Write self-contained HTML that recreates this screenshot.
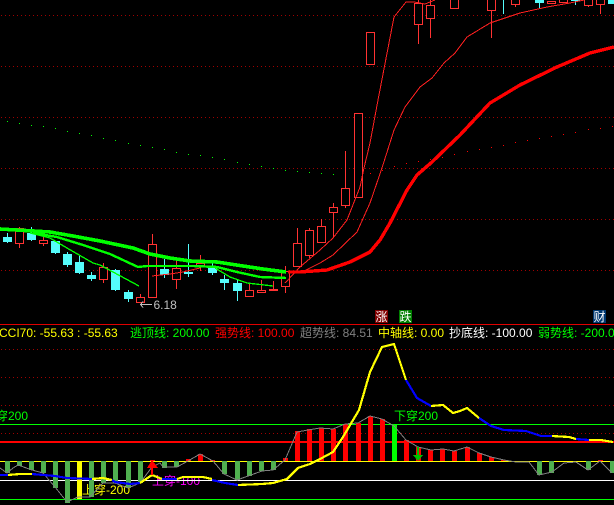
<!DOCTYPE html>
<html><head><meta charset="utf-8"><style>
html,body{margin:0;padding:0;background:#000;width:614px;height:505px;overflow:hidden}
svg{display:block;position:absolute;left:0;top:0}
text{font-family:"Liberation Sans","Noto Sans CJK SC",sans-serif;font-size:12px}
</style></head><body>
<svg width="614" height="505" viewBox="0 0 614 505" shape-rendering="crispEdges">
<rect width="614" height="505" fill="#000"/>
<!-- dotted grid -->
<path fill="none" stroke="#a00000" stroke-dasharray="1 3" d="M1 15.5H614M1 66.5H614M1 117.5H614M1 168.5H614M1 219.5H614M1 270.5H614M1 349.5H614M1 377.5H614M1 405.5H614M1 433.5H614"/>
<!-- MA dots -->
<g fill="#00ff00"><rect x="7" y="121" width="1" height="1"/><rect x="19" y="123" width="1" height="1"/><rect x="31" y="125" width="1" height="1"/><rect x="43" y="126" width="1" height="1"/><rect x="55" y="128" width="1" height="1"/><rect x="67" y="131" width="1" height="1"/><rect x="79" y="133" width="1" height="1"/><rect x="91" y="135" width="1" height="1"/><rect x="103" y="138" width="1" height="1"/><rect x="115" y="140" width="1" height="1"/><rect x="128" y="143" width="1" height="1"/><rect x="140" y="145" width="1" height="1"/><rect x="152" y="147" width="1" height="1"/><rect x="164" y="149" width="1" height="1"/><rect x="176" y="152" width="1" height="1"/><rect x="188" y="154" width="1" height="1"/><rect x="200" y="155" width="1" height="1"/><rect x="212" y="157" width="1" height="1"/><rect x="224" y="159" width="1" height="1"/><rect x="237" y="162" width="1" height="1"/><rect x="249" y="164" width="1" height="1"/><rect x="261" y="166" width="1" height="1"/><rect x="273" y="168" width="1" height="1"/><rect x="285" y="170" width="1" height="1"/><rect x="297" y="171" width="1" height="1"/><rect x="309" y="172" width="1" height="1"/><rect x="321" y="173" width="1" height="1"/><rect x="333" y="174" width="1" height="1"/><rect x="345" y="175" width="1" height="1"/><rect x="358" y="175" width="1" height="1"/></g>
<g fill="#ff0000"><rect x="370" y="173" width="1" height="1"/><rect x="382" y="170" width="1" height="1"/><rect x="394" y="166" width="1" height="1"/><rect x="406" y="163" width="1" height="1"/><rect x="418" y="161" width="1" height="1"/><rect x="430" y="159" width="1" height="1"/><rect x="442" y="157" width="1" height="1"/><rect x="454" y="154" width="1" height="1"/><rect x="467" y="151" width="1" height="1"/><rect x="479" y="149" width="1" height="1"/><rect x="491" y="147" width="1" height="1"/><rect x="503" y="145" width="1" height="1"/><rect x="515" y="142" width="1" height="1"/><rect x="527" y="140" width="1" height="1"/><rect x="539" y="138" width="1" height="1"/><rect x="551" y="136" width="1" height="1"/><rect x="563" y="134" width="1" height="1"/><rect x="575" y="132" width="1" height="1"/><rect x="588" y="129" width="1" height="1"/><rect x="600" y="128" width="1" height="1"/><rect x="612" y="126" width="1" height="1"/></g>
<!-- wicks -->
<path fill="none" stroke="#54fcfc" d="M7.5 233V243M31.5 227V241M55.5 241V254M67.5 252V267M79.5 255V274M91.5 272V281M115.5 269V291M128.5 290V302M164.5 259V278M188.5 244V277M212.5 263V275M224.5 275V290M237.5 280V301M503.5 0V14M539.5 0V8M575.5 0V5"/>
<path fill="none" stroke="#ff3232" d="M19.5 227V248M43.5 237V246M103.5 263V283M140.5 294V302M152.5 234V298M176.5 260V289M200.5 255V271M249.5 284V297M261.5 280V293M273.5 281V291M285.5 266V293M297.5 228V267M309.5 228V258M321.5 219V243M333.5 203V237M345.5 151V208M418.5 0V44M430.5 0V38M491.5 0V38M515.5 0V7M588.5 0V7M600.5 0V14"/>
<!-- cyan bodies -->
<g fill="#54fcfc"><rect x="3" y="237" width="9" height="5"/><rect x="27" y="233" width="9" height="7"/><rect x="51" y="241" width="9" height="12"/><rect x="63" y="254" width="9" height="11"/><rect x="75" y="262" width="9" height="11"/><rect x="87" y="275" width="9" height="4"/><rect x="111" y="270" width="9" height="20"/><rect x="124" y="292" width="9" height="7"/><rect x="160" y="269" width="9" height="6"/><rect x="184" y="272" width="9" height="2"/><rect x="208" y="268" width="9" height="5"/><rect x="220" y="279" width="9" height="4"/><rect x="233" y="283" width="9" height="8"/><rect x="535" y="0" width="9" height="3"/><rect x="571" y="0" width="9" height="1"/><rect x="608" y="0" width="6" height="4"/></g>
<!-- red bodies -->
<g fill="#000" stroke="#ff3232"><rect x="15.5" y="228.5" width="8" height="15"/><rect x="39.5" y="240.5" width="8" height="3"/><rect x="99.5" y="267.5" width="8" height="12"/><rect x="136.5" y="297.5" width="8" height="5"/><rect x="148.5" y="244.5" width="8" height="53"/><rect x="172.5" y="268.5" width="8" height="11"/><rect x="196.5" y="263.5" width="8" height="2"/><rect x="245.5" y="290.5" width="8" height="6"/><rect x="257.5" y="290.5" width="8" height="2"/><rect x="269.5" y="289.5" width="8" height="1" fill="#ff3232"/><rect x="281.5" y="271.5" width="8" height="15"/><rect x="293.5" y="243.5" width="8" height="23"/><rect x="305.5" y="230.5" width="8" height="25"/><rect x="317.5" y="226.5" width="8" height="16"/><rect x="329.5" y="207.5" width="8" height="5"/><rect x="341.5" y="188.5" width="8" height="17"/><rect x="354.5" y="113.5" width="8" height="84"/><rect x="366.5" y="32.5" width="8" height="32"/><rect x="414.5" y="3.5" width="8" height="21"/><rect x="426.5" y="5.5" width="8" height="13"/><rect x="450.5" y="-2.5" width="8" height="11"/><rect x="487.5" y="-2.5" width="8" height="13"/><rect x="511.5" y="-2.5" width="8" height="7"/><rect x="547.5" y="1.5" width="8" height="2"/><rect x="559.5" y="-2.5" width="8" height="5"/><rect x="584.5" y="-2.5" width="8" height="8"/><rect x="596.5" y="-2.5" width="8" height="7"/></g>
<!-- thin red lines -->
<g fill="none" stroke="#ff2020" stroke-width="1">
<polyline points="152,276 170,274 183,272 200,268"/>
<polyline points="285,283 300,267 320,250 333,238 347,220 360,187 364,168 370,143 378,100 394,17 406,2 414,2 425,4 435,0"/>
<polyline points="300,273 320,263 333,255 357,232 370,203 382,168 394,130 405,107 420,87 432,78 444,63 455,53 467,37 490,23 520,13 547,7 570,3 584,0"/>
</g>
<polyline fill="none" stroke="#ff0000" stroke-width="3.4" points="288,272 300,272 327,270 350,262 370,252 380,240 390,223 407,190 417,175 432,162 460,135 490,103 520,85 557,67 590,53 614,47"/>
<!-- green MAs -->
<polyline fill="none" stroke="#00ff00" stroke-width="1.3" points="30,233 50,238 67,248 93,263 100,265 113,272 139,286"/>
<polyline fill="none" stroke="#00ff00" stroke-width="1.3" points="215,268 230,277 247,283 273,286"/>
<polyline fill="none" stroke="#00ff00" stroke-width="2.4" points="33,233 57,237 83,245 110,254 138,267 147,266 160,266 193,266 217,267 237,272 260,277 286,278"/>
<polyline fill="none" stroke="#00ff00" stroke-width="3.6" points="0,229 50,232 73,236 100,241 133,248 150,254 170,258 190,261 217,262 243,266 263,269 286,272"/>
<!-- 6.18 -->
<path fill="none" stroke="#c0c0c0" d="M140.500 304.500H152M143 301.500L140.500 304.500L143 307.500"/>
<text x="153.500" y="309" fill="#c0c0c0">6.18</text>
<!-- badges -->
<rect x="375" y="310" width="13" height="13" fill="#800000"/><text x="375.500" y="321" fill="#fff">涨</text>
<rect x="399" y="310" width="13" height="13" fill="#008000"/><text x="399.500" y="321" fill="#fff">跌</text>
<rect x="593" y="310" width="13" height="13" fill="#003870"/><text x="593.500" y="321" fill="#fff">财</text>
<rect x="0" y="324" width="614" height="1" fill="#e00000"/>
<!-- header -->
<text x="-1" y="337" fill="#ffff00">CCI70: -55.63 : -55.63</text>
<text x="130" y="337" fill="#00ff00">逃顶线: 200.00</text>
<text x="215" y="337" fill="#ff0000">强势线: 100.00</text>
<text x="300" y="337" fill="#808080">超势线: 84.51</text>
<text x="378" y="337" fill="#ffff00">中轴线: 0.00</text>
<text x="449" y="337" fill="#ffffff">抄底线: -100.00</text>
<text x="538" y="337" fill="#00ff00">弱势线: -200.00</text>
<!-- lower labels -->
<text x="-16" y="420" fill="#00ff00">上穿200</text>
<text x="394" y="420" fill="#00ff00">下穿200</text>
<text x="82" y="494" fill="#ffff00">上穿-200</text>
<text x="152" y="485" fill="#ff00ff">上穿-100</text>
<!-- level lines -->
<rect x="0" y="424" width="614" height="1" fill="#00ff00"/>
<rect x="0" y="441" width="614" height="2" fill="#ff0000"/>
<rect x="0" y="461" width="614" height="1" fill="#ffff00"/>
<rect x="0" y="480" width="614" height="1" fill="#ffffff"/>
<rect x="0" y="499" width="614" height="1" fill="#00ff00"/>
<!-- green histogram -->
<g fill="#50b050"><rect x="5" y="461" width="5" height="12"/><rect x="17" y="461" width="5" height="5"/><rect x="29" y="461" width="5" height="9"/><rect x="41" y="461" width="5" height="12"/><rect x="53" y="461" width="5" height="27"/><rect x="65" y="461" width="5" height="42"/><rect x="89" y="461" width="5" height="36"/><rect x="101" y="461" width="5" height="22"/><rect x="113" y="461" width="5" height="22"/><rect x="126" y="461" width="5" height="27"/><rect x="138" y="461" width="5" height="22"/><rect x="162" y="461" width="5" height="7"/><rect x="174" y="461" width="5" height="6"/><rect x="222" y="461" width="5" height="13"/><rect x="235" y="461" width="5" height="19"/><rect x="247" y="461" width="5" height="15"/><rect x="259" y="461" width="5" height="10"/><rect x="271" y="461" width="5" height="9"/><rect x="537" y="461" width="5" height="14"/><rect x="549" y="461" width="5" height="12"/><rect x="586" y="461" width="5" height="9"/><rect x="610" y="461" width="4" height="12"/></g>
<rect x="77" y="461" width="5" height="38" fill="#ffff00"/>
<rect x="392" y="424" width="5" height="37" fill="#00ff00"/>
<!-- red histogram -->
<g fill="#ff0000"><rect x="150" y="460" width="5" height="1"/><rect x="186" y="459" width="5" height="2"/><rect x="198" y="454" width="5" height="7"/><rect x="210" y="460" width="5" height="1"/><rect x="283" y="458" width="5" height="3"/><rect x="295" y="431" width="5" height="30"/><rect x="307" y="429" width="5" height="32"/><rect x="319" y="428" width="5" height="33"/><rect x="331" y="429" width="5" height="32"/><rect x="343" y="424" width="5" height="37"/><rect x="356" y="423" width="5" height="38"/><rect x="368" y="416" width="5" height="45"/><rect x="380" y="419" width="5" height="42"/><rect x="404" y="440" width="5" height="21"/><rect x="416" y="447" width="5" height="14"/><rect x="428" y="450" width="5" height="11"/><rect x="440" y="449" width="5" height="12"/><rect x="452" y="451" width="5" height="10"/><rect x="465" y="447" width="5" height="14"/><rect x="477" y="453" width="5" height="8"/><rect x="489" y="457" width="5" height="4"/><rect x="501" y="460" width="5" height="1"/><rect x="598" y="460" width="5" height="1"/></g>
<!-- grey line -->
<polyline fill="none" stroke="#808080" points="0,468 7,473 13,468 18,465 32,470 43,473 55,487 67,502 78,497 90,497 103,483 115,483 128,488 140,483 152,467 160,463 163,467 177,467 188,461 200,454 213,461 224,474 237,480 248,476 262,471 273,470 285,460 297,432 308,430 320,428 333,429 345,424 358,423 370,416 382,419 394,426 406,440 418,447 431,450 443,449 454,451 467,447 479,453 491,457 504,460 516,462 529,462 539,475 552,472 564,463 576,462 588,470 600,461 612,473"/>
<!-- CCI line -->
<g fill="none" stroke-width="2.2">
<polyline stroke="#0000ff" points="0,475 8,475"/>
<polyline stroke="#ffff00" points="8,475 20,474 32,474"/>
<polyline stroke="#0000ff" points="32,474 55,476 67,478 92,479"/>
<polyline stroke="#ffff00" points="92,479 103,478 112,480"/>
<polyline stroke="#0000ff" points="112,480 115,482 130,484 140,483"/>
<polyline stroke="#ffff00" points="140,483 152,475 162,479"/>
<polyline stroke="#0000ff" points="162,479 177,479"/>
<polyline stroke="#ffff00" points="177,479 183,477 203,477 212,479"/>
<polyline stroke="#0000ff" points="212,480 225,483 238,485"/>
<polyline stroke="#ffff00" points="238,485 262,484 273,483 287,479 298,468 310,464 320,459 333,452 343,437 359,410 370,372 382,347 394,344 406,380"/>
<polyline stroke="#0000ff" points="406,380 417,398 431,406"/>
<polyline stroke="#ffff00" points="431,406 443,405 453,413 460,411 467,408 479,418"/>
<polyline stroke="#0000ff" points="479,418 491,426 504,430 526,431 541,436 552,436"/>
<polyline stroke="#ffff00" points="552,436 569,437 576,439"/>
<polyline stroke="#0000ff" points="576,439 589,440"/>
<polyline stroke="#ffff00" points="589,440 601,440 613,442"/>
</g>
<!-- arrows -->
<path fill="#ff0000" d="M152 460L158 468H147Z"/><rect x="151" y="468" width="2" height="7" fill="#ff0000"/>
<path fill="#00c000" d="M413 455H423L418 461Z"/><rect x="417" y="447" width="2" height="8" fill="#00c000"/>
</svg>
</body></html>
